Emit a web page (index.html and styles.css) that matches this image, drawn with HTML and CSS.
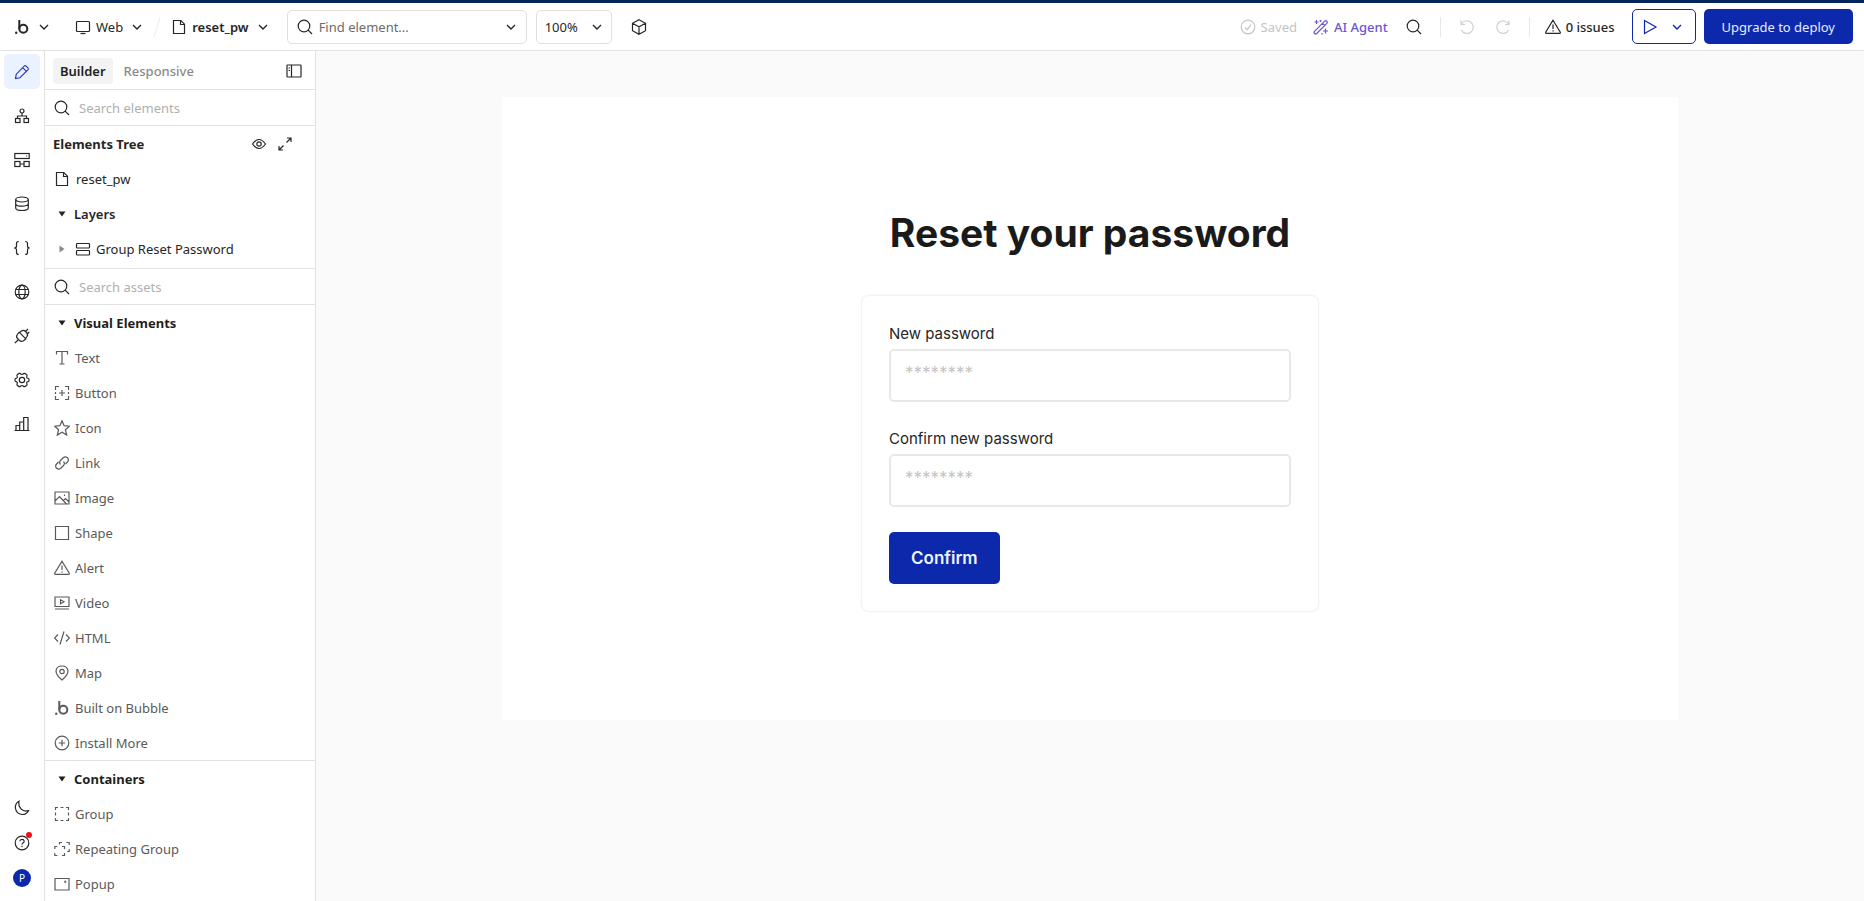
FILE: index.html
```html
<!DOCTYPE html>
<html lang="en">
<head>
  <meta charset="UTF-8">
  <meta name="viewport" content="width=device-width, initial-scale=1.0">
  <title>reset_pw | Editor</title>
  <link rel="stylesheet" href="styles.css">
</head>
<body>
  <svg class="sprite" aria-hidden="true">
    <symbol id="chevron" viewBox="0 0 16 16"><path d="M4 6l4 4 4-4"/></symbol>
    <symbol id="search" viewBox="0 0 16 16"><circle cx="7" cy="7" r="5.8"/><path d="M11.2 11.2L15 15"/></symbol>
    <symbol id="file" viewBox="0 0 16 16"><path d="M2.500 1.500h7.300l3.700 3.700v9.300h-11zM9.500 1.500v4h4"/></symbol>
    <symbol id="warning" viewBox="0 0 16 16"><path d="M8 1.200L15.300 13.300q.3 1-.8 1H1.500q-1.100 0-.8-1zM8 5.500v4.500M8 11.200v1.300"/></symbol>
    <symbol id="bubble" viewBox="0 0 16 16"><path d="M5.300 1v9" stroke-width="2"/><circle cx="9.300" cy="9.800" r="4" stroke-width="2"/><circle cx="2.200" cy="13.800" r="1.200" class="solid"/></symbol>
    <symbol id="caret" viewBox="0 0 16 16"><path d="M4.500 5.500h7L8 10.500z" class="solid"/></symbol>
  </svg>

  <header class="topbar">
    <button class="plain logo" aria-label="Main menu">
      <svg class="icon"><use href="#bubble"/></svg>
      <svg class="icon chevron"><use href="#chevron"/></svg>
    </button>
    <button class="plain platform">
      <svg class="icon" viewBox="0 0 16 16"><rect x="1.500" y="2.500" width="13" height="10" rx="1"/><path d="M5.500 14.500h5"/></svg>
      <span>Web</span>
      <svg class="icon chevron"><use href="#chevron"/></svg>
    </button>
    <svg class="slash" viewBox="0 0 8 24"><path d="M7 2L1 22"/></svg>
    <button class="plain page-name">
      <svg class="icon"><use href="#file"/></svg>
      <span>reset_pw</span>
      <svg class="icon chevron"><use href="#chevron"/></svg>
    </button>
    <label class="find">
      <svg class="icon"><use href="#search"/></svg>
      <input type="text" placeholder="Find element..." aria-label="Find element">
      <svg class="icon chevron"><use href="#chevron"/></svg>
    </label>
    <label class="zoom">
      <select aria-label="Zoom level">
        <option>100%</option>
        <option>75%</option>
        <option>50%</option>
      </select>
      <svg class="icon chevron"><use href="#chevron"/></svg>
    </label>
    <button class="plain cube" aria-label="Components">
      <svg class="icon" viewBox="0 0 16 16"><path d="M8 .8l6.500 3.500v7.400L8 15.200l-6.500-3.500V4.300zM1.500 4.300L8 7.800l6.500-3.500M8 7.800v7.400"/></svg>
    </button>

    <div class="actions">
      <span class="saved">
        <svg class="icon" viewBox="0 0 16 16"><circle cx="8" cy="8" r="6.800"/><path d="M5 8.300l2.200 2.400L11 5.500"/></svg>
        Saved
      </span>
      <button class="plain agent">
        <svg class="icon" viewBox="0 0 16 16"><path d="M1.500 12.300L11.600 2.200q1.200-1 2.200 0t0 2.200L3.700 14.500q-1.200 1-2.200 0t0-2.200zM9.500 4.300l2.200 2.200M3.500 1v4M1.500 3h4M7.500 1v2M6.500 2h2M12.500 9.500v5M10 12h5M9 14v1.500"/></svg>
        <span>AI Agent</span>
      </button>
      <button class="plain" aria-label="Search"><svg class="icon"><use href="#search"/></svg></button>
      <span class="divider"></span>
      <button class="plain faded" aria-label="Undo">
        <svg class="icon" viewBox="0 0 16 16"><path d="M2 1.500v4h4M2.300 5.300A6.300 6.300 0 1 1 2.300 11"/></svg>
      </button>
      <button class="plain faded redo" aria-label="Redo">
        <svg class="icon" viewBox="0 0 16 16"><path d="M14 1.500v4h-4M13.700 5.300A6.300 6.300 0 1 0 13.700 11"/></svg>
      </button>
      <span class="divider"></span>
      <button class="plain issues">
        <svg class="icon"><use href="#warning"/></svg>
        <span>0 issues</span>
      </button>
      <button class="preview" aria-label="Preview">
        <svg class="icon" viewBox="0 0 16 16"><path d="M2.500 1.500L14 8 2.500 14.500z"/></svg>
        <svg class="icon chevron"><use href="#chevron"/></svg>
      </button>
      <button class="upgrade">Upgrade to deploy</button>
    </div>
  </header>

  <div class="workspace">
    <nav class="rail">
      <button class="active" aria-label="Design">
        <svg class="icon" viewBox="0 0 16 16"><path d="M1.500 14.500l.8-4.300 7.900-8q1-1 2 0l1.700 1.700q1 1 0 2l-8 7.900zM8.700 3.700l3.700 3.700 1-1"/></svg>
      </button>
      <button aria-label="Workflow">
        <svg class="icon" viewBox="0 0 16 16"><circle cx="8" cy="3" r="2"/><path d="M8 5v3M3.500 10.500V8h9v2.500"/><rect x="1.500" y="10.500" width="4.500" height="4"/><rect x="10" y="10.500" width="4.500" height="4"/></svg>
      </button>
      <button aria-label="Views">
        <svg class="icon" viewBox="0 0 16 16"><rect x=".8" y="1.500" width="14.400" height="5"/><rect x=".8" y="9.500" width="5.200" height="5"/><rect x="10" y="9.500" width="5.200" height="5"/><path d="M6 12h4M12.200 4h1"/></svg>
      </button>
      <button aria-label="Data">
        <svg class="icon" viewBox="0 0 16 16"><ellipse cx="8" cy="3.500" rx="6.300" ry="2.500"/><path d="M1.700 3.500v8.500c0 3.300 12.600 3.300 12.600 0V3.500M1.700 7.700c0 3.300 12.600 3.300 12.600 0"/></svg>
      </button>
      <button aria-label="Variables">
        <svg class="icon" viewBox="0 0 16 16"><path d="M4.800 1.500q-2.300 0-2.300 2v2.500q0 2-2.200 2 2.200 0 2.200 2v2.500q0 2 2.300 2M11.200 1.500q2.300 0 2.300 2v2.500q0 2 2.200 2-2.200 0-2.200 2v2.500q0 2-2.300 2"/></svg>
      </button>
      <button aria-label="Languages">
        <svg class="icon" viewBox="0 0 16 16"><circle cx="8" cy="8" r="6.800"/><ellipse cx="8" cy="8" rx="3.200" ry="6.800"/><path d="M1.700 5.500h12.600M1.700 10.500h12.600"/></svg>
      </button>
      <button aria-label="Plugins">
        <svg class="icon" viewBox="0 0 16 16"><path d="M4.800 3.800l7.500 7.500M5.500 4.500L7.500 3q2-1.500 4 .5l1 1q2 2 .5 4l-1.500 2M5 4.300L3.300 6.500q-1.500 2.200.2 4l2 2q1.800 1.700 4 .2L11.800 11M4 12L.8 15.200M11.500 3.500L14 1M12.700 6.500l2.500-2.500"/></svg>
      </button>
      <button aria-label="Settings">
        <svg class="icon" viewBox="0 0 16 16"><path d="M5.200 1.400q1.200-.4 1.800.7.200.4 1 .4t1-.4q.6-1.100 1.800-.7l1.700 1q1 .8.400 1.900-.5.900 0 1.500.3.500 1.100.5 1 .3 1.100 1.700t-1.100 1.700q-.8 0-1.100.5-.5.600 0 1.500.6 1.100-.4 1.900l-1.700 1q-1.200.4-1.800-.7-.2-.4-1-.4t-1 .4q-.6 1.100-1.800.7l-1.700-1q-1-.8-.4-1.900.5-.9 0-1.500-.3-.5-1.100-.5Q1 9.400.9 8T2 6.300q.8 0 1.100-.5.500-.6 0-1.500-.6-1.100.4-1.900z"/><circle cx="8" cy="8" r="2.700"/></svg>
      </button>
      <button aria-label="Logs">
        <svg class="icon" viewBox="0 0 16 16"><path d="M.5 14.500h15M2 14.500v-5h3.700M5.700 14.500v-8.500h4M9.700 14.500v-13H14v13"/></svg>
      </button>
      <div class="rail-foot">
        <button aria-label="Dark mode">
          <svg class="icon" viewBox="0 0 16 16"><path d="M5 1.200q-4 2-3.600 6.800.8 5.800 6.600 6.500 4.500.2 6.500-3.800-4.500 1.300-7.200-1.500Q4 5.800 5 1.200z"/></svg>
        </button>
        <button class="help" aria-label="Help">
          <svg class="icon" viewBox="0 0 16 16"><circle cx="8" cy="8" r="6.800"/><path d="M5.800 6.300q.2-2 2.200-2t2.200 1.900q0 1.100-1.200 1.700-1 .6-1 1.600M8 10.800v1.300"/></svg>
          <span class="dot"></span>
        </button>
        <button aria-label="Account"><span class="avatar">P</span></button>
      </div>
    </nav>

    <aside class="panel">
      <div class="tabs">
        <button class="tab selected">Builder</button>
        <button class="tab">Responsive</button>
        <button class="plain collapse" aria-label="Collapse panel">
          <svg class="icon" viewBox="0 0 16 16"><rect x="1" y="2" width="14" height="12" rx=".5"/><path d="M5.500 2v12M2.500 5h1.500M2.500 7.500h1.500"/></svg>
        </button>
      </div>
      <label class="search">
        <svg class="icon"><use href="#search"/></svg>
        <input type="text" placeholder="Search elements" aria-label="Search elements">
      </label>

      <section class="tree">
        <div class="row heading">
          <h2>Elements Tree</h2>
          <button class="plain" aria-label="Toggle visibility">
            <svg class="icon" viewBox="0 0 16 16"><path d="M1.500 8q6.500-9 13 0-6.500 9-13 0z"/><circle cx="8" cy="8" r="2.200"/></svg>
          </button>
          <button class="plain" aria-label="Expand">
            <svg class="icon" viewBox="0 0 16 16"><path d="M9.500 6.500l4.500-4.500M10 2h4v4M6.500 9.500L2 14M2 10v4h4"/></svg>
          </button>
        </div>
        <button class="row node">
          <svg class="icon"><use href="#file"/></svg>
          <span>reset_pw</span>
        </button>
        <button class="row node layers">
          <svg class="icon"><use href="#caret"/></svg>
          <span>Layers</span>
        </button>
        <button class="row node child">
          <svg class="icon closed"><use href="#caret"/></svg>
          <svg class="icon" viewBox="0 0 16 16"><rect x="1.500" y="2.500" width="13" height="4.500" rx=".8"/><rect x="1.500" y="9.500" width="13" height="4.500" rx=".8"/></svg>
          <span>Group Reset Password</span>
        </button>
      </section>

      <label class="search">
        <svg class="icon"><use href="#search"/></svg>
        <input type="text" placeholder="Search assets" aria-label="Search assets">
      </label>

      <section class="assets">
        <button class="row group-title"><svg class="icon"><use href="#caret"/></svg>Visual Elements</button>
        <button class="row asset"><svg class="icon" viewBox="0 0 16 16"><path d="M2.500 4.500v-3h11v3M8 1.500v12.500M5.500 14h5"/></svg>Text</button>
        <button class="row asset"><svg class="icon" viewBox="0 0 16 16"><path d="M1.500 5V1.500H5M11 1.500h3.500V5M14.500 11v3.500H11M5 14.500H1.500V11M8 5v6M5 8h6M1.500 7v2M14.500 7v2"/></svg>Button</button>
        <button class="row asset"><svg class="icon" viewBox="0 0 16 16"><path d="M8 .8l2.100 4.900 5.300.5-4 3.500 1.300 5.400L8 12.300l-4.700 2.800 1.300-5.400-4-3.500 5.300-.5z"/></svg>Icon</button>
        <button class="row asset"><svg class="icon" viewBox="0 0 16 16"><path d="M6.500 9.500q-1.800-2 0-4l2.700-2.700q2.200-1.900 4.200 0t0 4.200L11.500 9M9.500 6.500q1.800 2 0 4l-2.700 2.700q-2.200 1.900-4.200 0t0-4.200L4.500 7"/></svg>Link</button>
        <button class="row asset"><svg class="icon" viewBox="0 0 16 16"><path d="M1 2h14v12H1zM1 11l4.500-4.500L12.500 14M9.500 10.500l2-2L15 12M10.500 4.500v1.500"/></svg>Image</button>
        <button class="row asset"><svg class="icon" viewBox="0 0 16 16"><path d="M1.500 1.500h13v13h-13z"/></svg>Shape</button>
        <button class="row asset"><svg class="icon"><use href="#warning"/></svg>Alert</button>
        <button class="row asset"><svg class="icon" viewBox="0 0 16 16"><path d="M1 2h14v9.500H1zM1 14h14M6.500 4.800v4l3.500-2z"/></svg>Video</button>
        <button class="row asset"><svg class="icon" viewBox="0 0 16 16"><path d="M4 4.500L.5 8 4 11.500M12 4.500L15.500 8 12 11.500M10 1.500l-4 13"/></svg>HTML</button>
        <button class="row asset"><svg class="icon" viewBox="0 0 16 16"><path d="M8 15q-6-5-6-9 .5-5 6-5t6 5q0 4-6 9z"/><circle cx="8" cy="6.500" r="2.200"/></svg>Map</button>
        <button class="row asset"><svg class="icon"><use href="#bubble"/></svg>Built on Bubble</button>
        <button class="row asset"><svg class="icon" viewBox="0 0 16 16"><circle cx="8" cy="8" r="6.800"/><path d="M8 4.800v6.400M4.800 8h6.400"/></svg>Install More</button>
      </section>

      <section class="assets">
        <button class="row group-title"><svg class="icon"><use href="#caret"/></svg>Containers</button>
        <button class="row asset"><svg class="icon" viewBox="0 0 16 16"><path d="M1.500 4V1.500H4M12 1.500h2.500V4M14.500 12v2.500H12M4 14.500H1.500V12M6.500 1.500h3M6.500 14.500h3M1.500 6.500v3M14.500 6.500v3"/></svg>Group</button>
        <button class="row asset"><svg class="icon" viewBox="0 0 16 16"><path d="M.8 8V5.500h2.500M8 5.500h2.500V8M10.500 12v2.500H8M3.300 14.500H.8V12M5.500 3.500v-2H8M12.500 1.500h2.700V4M15.200 8v2.500h-2"/></svg>Repeating Group</button>
        <button class="row asset"><svg class="icon" viewBox="0 0 16 16"><path d="M1 2.500h14v11.500H1zM10.500 5l1.500 1.500M12 5l-1.500 1.500"/></svg>Popup</button>
      </section>
    </aside>

    <main class="canvas">
      <div class="page">
        <h1>Reset your password</h1>
        <form class="card">
          <div class="field">
            <label for="new-password">New password</label>
            <input type="password" id="new-password" placeholder="********">
          </div>
          <div class="field">
            <label for="confirm-password">Confirm new password</label>
            <input type="password" id="confirm-password" placeholder="********">
          </div>
          <button type="button" class="confirm">Confirm</button>
        </form>
      </div>
    </main>
  </div>
</body>
</html>
```
FILE: styles.css
```css
* {
  box-sizing: border-box;
}
body {
  margin: 0;
  height: 100vh;
  display: flex;
  flex-direction: column;
  overflow: hidden;
  font-family: "Noto Sans", sans-serif;
  font-size: 13px;
  line-height: 20px;
  color: #262626;
  background-color: #fff;
}
button, input, select {
  font: inherit;
  color: inherit;
}
button {
  padding: 0;
  border: none;
  background: none;
  cursor: pointer;
}
input {
  min-width: 0;
  border: none;
  background: none;
  outline: none;
}
.sprite {
  display: none;
}
.icon {
  flex: none;
  width: 16px;
  height: 16px;
  fill: none;
  stroke: currentColor;
  stroke-width: 1.2;
}
.icon.chevron {
  stroke-width: 1.4;
}
.solid {
  fill: currentColor;
  stroke: none;
}
.plain {
  display: flex;
  align-items: center;
}

/* top bar */
.topbar {
  flex: none;
  display: flex;
  align-items: center;
  height: 51px;
  padding: 0 11px 0 14px;
  border-top: 3px solid #04245c;
  border-bottom: 1px solid #e2e2e2;
}
.logo {
  gap: 6px;
}
.platform {
  gap: 5px;
  margin-left: 23px;
}
.platform .chevron,
.page-name .chevron {
  margin-left: 1px;
}
.slash {
  width: 8px;
  height: 24px;
  margin: 0 10px 0 8px;
  fill: none;
  stroke: #ececec;
}
.page-name {
  gap: 5px;
  font-weight: 600;
}
.find {
  display: flex;
  align-items: center;
  gap: 4px;
  width: 240px;
  height: 34px;
  margin-left: 16px;
  padding: 0 7px 0 9px;
  border: 1px solid #e0e0e0;
  border-radius: 5px;
}
.find input {
  flex: 1;
}
.find input::placeholder {
  color: #6b6b6b;
}
.zoom {
  display: grid;
  align-items: center;
  width: 76px;
  height: 34px;
  margin-left: 9px;
  border: 1px solid #e0e0e0;
  border-radius: 5px;
}
.zoom select {
  grid-area: 1 / 1;
  height: 32px;
  padding: 0 8px;
  border: none;
  background: none;
  appearance: none;
}
.zoom .icon {
  grid-area: 1 / 1;
  justify-self: end;
  margin-right: 6px;
  pointer-events: none;
}
.cube {
  margin-left: 19px;
}
.actions {
  display: flex;
  align-items: center;
  margin-left: auto;
}
.saved {
  display: flex;
  align-items: center;
  gap: 5px;
  color: #c4c4c4;
}
.agent {
  gap: 5px;
  margin: 0 18px 0 16px;
  color: #6a55d9;
  font-weight: 500;
}
.divider {
  width: 1px;
  height: 20px;
  margin: 0 18px;
  background-color: #e8e8e8;
}
.faded {
  color: #cfcfcf;
}
.redo {
  margin-left: 20px;
}
.issues {
  gap: 5px;
  margin: 0 17px 0 -3px;
  font-weight: 500;
}
.preview {
  display: flex;
  align-items: center;
  justify-content: center;
  gap: 11px;
  width: 64px;
  height: 35px;
  margin-right: 8px;
  border: 1px solid #0c29ab;
  border-radius: 5px;
  color: #0c29ab;
}
.upgrade {
  height: 35px;
  padding: 0 18px;
  border-radius: 5px;
  background-color: #0c29ab;
  color: #e6ecff;
}

.workspace {
  flex: 1;
  display: flex;
  min-height: 0;
}

/* left icon rail */
.rail {
  flex: none;
  display: flex;
  flex-direction: column;
  align-items: center;
  gap: 9px;
  width: 45px;
  padding: 3px 0 6px;
  border-right: 1px solid #e2e2e2;
}
.rail button {
  display: flex;
  align-items: center;
  justify-content: center;
  width: 36px;
  height: 35px;
  border-radius: 5px;
}
.rail .active {
  background-color: #eaf1ff;
  color: #2b3bb5;
}
.rail-foot {
  margin-top: auto;
}
.help {
  position: relative;
}
.dot {
  position: absolute;
  top: 7px;
  right: 8px;
  width: 6px;
  height: 6px;
  border-radius: 50%;
  background-color: #f01010;
}
.avatar {
  width: 18px;
  height: 18px;
  border-radius: 50%;
  background-color: #0c29ab;
  color: #fff;
  font-size: 10px;
  line-height: 18px;
}

/* elements panel */
.panel {
  flex: none;
  width: 271px;
  border-right: 1px solid #e2e2e2;
  overflow: hidden;
}
.tabs {
  display: flex;
  align-items: center;
  height: 39px;
  padding: 2px 13px 0 8px;
  border-bottom: 1px solid #e2e2e2;
}
.tab {
  height: 26px;
  padding: 0 7px;
  border-radius: 4px;
  color: #8a8a8a;
  font-weight: 500;
}
.tab.selected {
  margin-right: 4px;
  background-color: #f3f3f3;
  color: #1f1f1f;
  font-weight: 600;
}
.collapse {
  margin-left: auto;
}
.search {
  display: flex;
  align-items: center;
  gap: 7px;
  height: 36px;
  padding: 0 9px;
  border-bottom: 1px solid #e2e2e2;
}
.search input {
  flex: 1;
}
.search input::placeholder {
  color: #b0b0b0;
}
.row {
  display: flex;
  align-items: center;
  width: 100%;
  height: 35px;
  padding: 0 9px;
  text-align: left;
}
.tree {
  padding-bottom: 2px;
  border-bottom: 1px solid #e2e2e2;
}
.heading {
  gap: 10px;
  padding: 0 22px 0 8px;
}
.row h2 {
  flex: 1;
  margin: 0;
  font-size: 13px;
  font-weight: 700;
}
.node {
  gap: 6px;
}
.layers {
  gap: 4px;
  font-weight: 600;
}
.child {
  gap: 5px;
}
.closed {
  transform: rotate(-90deg);
  color: #8a8a8a;
}
.assets + .assets {
  border-top: 1px solid #e2e2e2;
}
.group-title {
  gap: 4px;
  color: #1f1f1f;
  font-weight: 700;
}
.asset {
  gap: 5px;
  color: #5a5a5a;
}

/* canvas with the edited page */
.canvas {
  flex: 1;
  padding: 46px 10%;
  background-color: #fafafa;
}
.page {
  display: flex;
  flex-direction: column;
  align-items: center;
  padding: 108px 24px;
  background-color: #fff;
  font-family: Inter, sans-serif;
  font-size: 15px;
  line-height: 24px;
}
.page h1 {
  margin: 0 0 34px;
  color: #1a1a1a;
  font-size: 39px;
  font-weight: 700;
  line-height: 56px;
}
.card {
  display: flex;
  flex-direction: column;
  align-items: flex-start;
  gap: 25px;
  width: 100%;
  max-width: 458px;
  padding: 26px 27px 27px;
  border: 1px solid #f3f3f3;
  border-radius: 8px;
  box-shadow: 0 0 2px #f0f0f0;
}
.field {
  display: flex;
  flex-direction: column;
  gap: 3px;
  width: 100%;
}
.field input {
  height: 53px;
  padding: 0 14px 4px;
  border: 2px solid #e8e8e8;
  border-radius: 5px;
}
.field input::placeholder {
  color: #c4c4c4;
  font-size: 17px;
}
.confirm {
  height: 52px;
  padding: 0 22px;
  border-radius: 5px;
  background-color: #0c29ab;
  color: #f0f4ff;
  font-size: 17px;
  font-weight: 600;
}
```
